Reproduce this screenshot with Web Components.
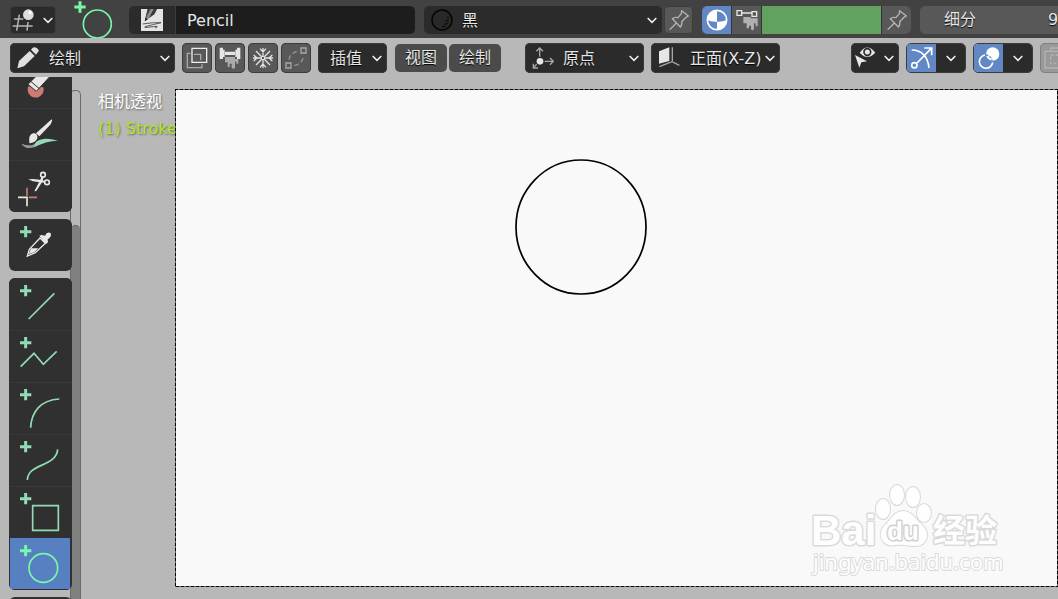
<!DOCTYPE html>
<html lang="zh-CN">
<head>
<meta charset="utf-8">
<title>Grease Pencil</title>
<style>
  html, body { margin: 0; height: 100%; overflow: hidden; }
  body { font: 16px/20px "DejaVu Sans", "Noto Sans CJK SC", sans-serif; color: #e6e6e6; background: #b8b8b8; }
</style>
</head>
<body>
<bl-app></bl-app>
<script>
const define = (name, css, html) => {
  const template = document.createElement('template');
  template.innerHTML = `<style>*{box-sizing:border-box}${css}</style>`;
  customElements.define(name, class extends HTMLElement {
    connectedCallback() {
      if (this.shadowRoot) return;
      const root = this.attachShadow({ mode: 'open' });
      root.append(template.content.cloneNode(true));
      const body = document.createElement('template');
      body.innerHTML = typeof html === 'function' ? html(this) : html;
      root.append(body.content.cloneNode(true));
    }
  });
};

/* Icon artwork is drawn on a grid of three units per pixel: [width, height, markup]. */
const plus = '<path d="M33 38H67M50 21V55" stroke="currentColor" stroke-width="9"/>';
const tool = m => [63, 52, m];
const shape = m => tool(plus + `<g fill="none" stroke="currentColor" stroke-width="5">${m}</g>`);
const ICONS = {
  chevron: [12, 12, '<path d="M5 12L18 25L31 12" fill="none" stroke="#f0f0f0" stroke-width="4.5"/>'],
  grid: [24, 24, '<path d="M6 33H34M2 54H62M22 20L14 68M48 42L45 68" fill="none" stroke="#b4b4b4" stroke-width="4.5"/><circle cx="49" cy="20" r="16" fill="#dcdcdc"/><circle cx="54" cy="14" r="5" fill="#fff"/>'],
  active: [42, 38, '<path d="M7 21H41M24 4V38" stroke="#79f7a9" stroke-width="9"/><circle cx="76" cy="72" r="42" fill="none" stroke="#79f7a9" stroke-width="5"/>'],
  thumb: [22, 22, '<path d="M0 0H66V66H0Z" fill="#e4e4e4"/><path d="M20 0H48L40 16L24 28L13 36L14 24Z" fill="#8a8a8a"/><path d="M20 0H28L17 22L13 36L14 24ZM38 0H48L40 16L24 27Z" fill="#3a3a3a"/><path d="M11 37L14 26L20 31Z" fill="#111"/><path d="M5 45Q34 40 60 41Q40 46 12 53Q8 56 18 55L48 52Q52 53 42 57" fill="none" stroke="#3c3c3c" stroke-width="2.5"/>'],
  ball: [22, 22, '<circle cx="33" cy="33" r="30" fill="#292929" stroke="#050505" stroke-width="4.5"/><path d="M53 24L48 27M54 33L44 37M52 43L40 46M44 52L33 53" stroke="#0c0c0c" stroke-width="4"/>'],
  pin: [20, 20, '<path d="M2 59L22 39M38 2L58 18L51 22L38 35Q40 44 34 51L10 26Q17 20 27 23L37 11Z" fill="none" stroke="#b4b4b4" stroke-width="4" stroke-linejoin="round"/>'],
  material: [22, 22, '<circle cx="33" cy="33" r="29" fill="none" stroke="#fff" stroke-width="5"/><path d="M33 38V4A29 29 0 0 0 4 33Q16 39 33 38ZM33 38V62A29 29 0 0 0 62 33Q50 39 33 38Z" fill="#fff"/>'],
  vertexpaint: [22, 22, '<path d="M18 12H48M3 5H17V19H3ZM48 8H62V22H48Z" fill="none" stroke="#e6e6e6" stroke-width="4"/><path d="M22 24H44V28H65V52H59V43H54V60Q50 68 45 60V50H39V58H32V43H22Z" fill="#b0b0b0"/>'],
  pencil: [22, 22, '<path d="M1 64L6 42L38 12L53 27L21 58Z" fill="#e0e0e0"/><path d="M42 8Q50 -4 60 4T61 17L57 23Z" fill="#e0e0e0"/>'],
  multiframe: [22, 22, '<path d="M14 19H4V62H48V52" fill="none" stroke="#aaa" stroke-width="4"/><path d="M18 4H62V46H18Z" fill="none" stroke="#eee" stroke-width="4"/><path d="M24 22H44V40" fill="none" stroke="#aaa" stroke-width="4"/>'],
  weight: [22, 22, '<path d="M2 2H12V36H2ZM54 2H64V36H54ZM18 14H48V24H18ZM12 8H17V30H12ZM49 8H54V30H49Z" fill="#e6e6e6"/><path d="M18 30H48V36H58V50H52V44H48V62Q43 68 38 62V50H32V60H26V46H18Z" fill="#aaa"/>'],
  snow: [22, 22, '<path d="M33 3V27M33 39V63M3 33H27M39 33H63M12 12L29 29M37 37L54 54M54 12L37 29M29 37L12 54M24 5L33 15L42 5M24 61L33 51L42 61M5 24L15 33L5 42M61 24L51 33L61 42" fill="none" stroke="#e2e2e2" stroke-width="4"/><circle cx="33" cy="33" r="5" fill="none" stroke="#e2e2e2" stroke-width="3"/>'],
  curve: [22, 22, '<path d="M3 48H18V63H3ZM48 3H63V18H48Z" fill="none" stroke="#a8a8a8" stroke-width="4"/><path d="M12 38Q14 20 40 11M28 56Q53 50 56 26" fill="none" stroke="#969696" stroke-width="4" stroke-dasharray="14 8"/>'],
  origin: [22, 22, '<circle cx="24" cy="43" r="10" fill="#e6e6e6"/><path d="M23 29V4M13 13L23 3L33 13M38 43H64M54 33L64 43L54 53M14 52L4 62M4 50V63H18" fill="none" stroke="#a8a8a8" stroke-width="4"/>'],
  plane: [22, 22, '<path d="M3 13L34 1V42L3 50Z" fill="#e6e6e6"/><path d="M43 1V42M4 59L42 44L64 55" fill="none" stroke="#a8a8a8" stroke-width="4"/>'],
  eye: [22, 22, '<path d="M14 17Q37 -14 61 17Q37 42 14 17Z" fill="#e6e6e6"/><circle cx="37" cy="15" r="10" fill="#e6e6e6" stroke="#2b2b2b" stroke-width="5"/><path d="M0 24L36 43L19 46L13 62Z" fill="#e6e6e6"/>'],
  gizmo: [22, 22, '<path d="M2 9Q48 10 54 63M18 48L61 4M40 3H62V25" fill="none" stroke="#fff" stroke-width="5"/><circle cx="10" cy="55" r="8" fill="#6187c4" stroke="#fff" stroke-width="5"/>'],
  overlay: [22, 22, '<circle cx="44" cy="21" r="20" fill="#fff"/><path d="M21 24A20 20 0 1 0 44 46" fill="none" stroke="#fff" stroke-width="5"/><path d="M24 24A20 20 0 0 1 42 41" fill="none" stroke="#6187c4" stroke-width="4" stroke-dasharray="7 4"/>'],
  xray: [22, 22, '<path d="M3 13V63H60V13ZM20 13V3H64V40" fill="none" stroke="#b4b4b4" stroke-width="4"/><path d="M20 24H46V50H20Z" fill="none" stroke="#b4b4b4" stroke-width="4" stroke-dasharray="9 6"/>'],
  erase: tool('<path d="M58 91A24 24 0 1 0 103 94Z" fill="#cc7b74"/><path d="M57 85L96 46L126 58L82 106Z" fill="#e8e8e8" stroke="#303030" stroke-width="3"/><path d="M65 76L91 98" stroke="#303030" stroke-width="3"/>'),
  brush: tool('<path d="M128 34Q132 37 124 50L91 85L81 76Z" fill="#e8e8e8"/><path d="M61 106Q57 77 75 75Q87 78 85 91Q80 105 61 106Z" fill="#e8e8e8"/><path d="M37 107Q70 119 84 101L76 118Q50 126 37 107Z" fill="#999"/><path d="M76 118Q73 96 108 92Q124 91 147 98Q110 99 76 118Z" fill="#93dbb5"/>'),
  cut: tool('<g fill="none" stroke="#e8e8e8" stroke-width="5"><circle cx="102" cy="44" r="7"/><circle cx="114" cy="67" r="7"/></g><path d="M58 58Q78 55 106 62L104 68L72 64ZM76 94L93 61L99 49L104 52L100 65L82 93Z" fill="#e8e8e8"/><path d="M27 112H54V139" fill="none" stroke="#e8e8e8" stroke-width="5"/><path d="M54 83V107M59 112H84" stroke="#cc7b74" stroke-width="5"/>'),
  dropper: tool(plus + '<path d="M55 111L61 91L93 57L109 73L79 101Z" fill="#303030" stroke="#e8e8e8" stroke-width="4"/><path d="M59 106L66 88H88L77 99Z" fill="#e8e8e8"/><path d="M91 50L98 48L108 50Q114 36 125 42Q129 54 116 61L117 70L110 76Z" fill="#e8e8e8"/>'),
  line: shape('<path d="M59 123L136 46"/>'),
  polyline: shape('<path d="M35 110L75 70L103 103L143 64"/>'),
  arc: shape('<path d="M65 137C67 90 94 54 151 51"/>'),
  bezier: shape('<path d="M55 138C56 88 142 99 146 46"/>'),
  box: shape('<path d="M71 59H148V133H71Z"/>'),
  circle: shape('<circle cx="103" cy="90" r="43"/>'),
};

define('bl-icon', ':host{display:inline-flex;flex:none} svg{display:block}', el => {
  const [w, h, art] = ICONS[el.getAttribute('name')];
  return `<svg width="${w}" height="${h}" viewBox="0 0 ${w * 3} ${h * 3}" aria-hidden="true">${art}</svg>`;
});

/* Drop-down: a select with an icon and a chevron stacked over it. */
define('bl-select', `
  :host{display:grid;align-items:center;height:30px;border-radius:5px;background:#2b2b2b;box-shadow:inset 0 0 0 1px #3a3a3a;flex:none}
  :host([plain]){height:28px;background:#2b2b2b;box-shadow:none}
  select,.art{grid-area:1/1}
  select{appearance:none;width:100%;height:100%;border:0;margin:0;padding:2px 0 0 var(--indent,12px);background:none;color:inherit;font:inherit;text-shadow:0 1px 1px #000}
  .art{display:flex;align-items:center;justify-content:space-between;padding:0 4px 0 7px;pointer-events:none}
  .art bl-icon:last-child{margin-left:auto}`,
  el => `<select aria-label="${el.getAttribute('label')}"><option>${el.getAttribute('value')}</option></select>
  <span class="art">${el.hasAttribute('icon') ? `<bl-icon name="${el.getAttribute('icon')}"></bl-icon>` : ''}<bl-icon name="chevron"></bl-icon></span>`);

define('bl-button', `
  :host{display:flex;height:30px;border-radius:5px;overflow:hidden;background:#585858;box-shadow:0 0 0 1px #3c3c3c inset;flex:none}
  :host([dark]){background:#2b2b2b}
  :host([on]){background:#6187c4}
  :host([dim]){background:#999;box-shadow:0 0 0 1px #808080 inset}
  :host([text]){height:28px;background:#4b4b4b;box-shadow:none}
  :host([short]){height:28px}
  :host([joined]){border-radius:0;box-shadow:none}
  button{display:flex;align-items:center;justify-content:center;gap:6px;width:100%;border:0;margin:0;padding:0;background:none;color:inherit;font:inherit;text-shadow:0 1px 1px #000}`,
  el => `<button type="button" aria-label="${el.getAttribute('label')}"><slot></slot></button>`);

define('bl-field', `
  :host{display:flex;flex:1 0 160px;height:28px;border-radius:5px;background:#585858;overflow:hidden;text-shadow:0 1px 1px #000}
  label{flex:none;width:128px;padding-left:24px;line-height:28px}
  input{width:40px;flex:1;border:0;padding:0;background:none;color:inherit;font:inherit;text-shadow:inherit}`,
  '<label for="n">细分</label><input id="n" value="9" inputmode="numeric">');

define('bl-tool-settings', `
  :host{display:flex;align-items:center;gap:9px;height:38px;padding:2px 0 0 10px;background:#424242;overflow:hidden;flex:none}
  .active{display:flex;flex:none;justify-content:center;width:55px;margin-top:-2px}
  .row{display:flex;flex:none}
  .brush{border-radius:5px;overflow:hidden}
  .brush input{width:240px;height:28px;border:0;border-left:1px solid #3c3c3c;padding:0 11px;background:#1d1d1d;color:inherit;font:inherit}
  .material{gap:2px}
  .material bl-select{width:238px;--indent:38px}
  .paint{border-radius:5px;overflow:hidden;gap:1px;background:#333}
  input[type=color]{appearance:none;width:119px;height:28px;border:0;padding:0;background:none}
  ::-webkit-color-swatch-wrapper{padding:0} ::-webkit-color-swatch{border:0;border-radius:0}
  .w46{width:46px}.w29{width:29px}`,
  `<bl-button class="w46" dark short label="编辑器类型"><bl-icon name="grid"></bl-icon><bl-icon name="chevron"></bl-icon></bl-button>
  <div class="active"><bl-icon name="active"></bl-icon></div>
  <div class="row brush"><bl-button class="w46" dark short joined label="笔刷"><bl-icon name="thumb"></bl-icon></bl-button><input aria-label="笔刷名称" value="Pencil"></div>
  <div class="row material"><bl-select plain icon="ball" label="材质" value="黑"></bl-select><bl-button class="w29" short label="固定材质"><bl-icon name="pin"></bl-icon></bl-button></div>
  <div class="row paint"><bl-button class="w29" on short joined label="材质颜色"><bl-icon name="material"></bl-icon></bl-button><bl-button class="w29" short joined label="顶点颜色"><bl-icon name="vertexpaint"></bl-icon></bl-button><input type="color" aria-label="颜色" value="#61a261"><bl-button class="w29" short joined label="固定颜色"><bl-icon name="pin"></bl-icon></bl-button></div>
  <bl-field></bl-field>`);

define('bl-header', `
  :host{display:flex;align-items:center;gap:7px;height:39px;padding:1px 0 0 10px;overflow:hidden;flex:none}
  .row{display:flex;flex:none}
  .toggles{gap:3px}.menus{gap:2px;padding:0 17px 0 1px}
  .mode{width:165px;--indent:39px}.interp{width:69px}.origin{width:119px;--indent:38px}.plane{width:129px;--indent:39px}
  .sq{width:30px}.menu{width:52px}.vis{width:48px}
  .right{gap:7px;margin-left:auto}
  .split{border-radius:5px;overflow:hidden;border:1px solid #3c3c3c;height:30px;align-items:center}
  .split bl-button{width:29px}
  .edge{width:18px;overflow:hidden}`,
  `<bl-select class="mode" icon="pencil" label="模式" value="绘制"></bl-select>
  <div class="row toggles"><bl-button class="sq" label="多帧"><bl-icon name="multiframe"></bl-icon></bl-button><bl-button class="sq" label="权重"><bl-icon name="weight"></bl-icon></bl-button><bl-button class="sq" label="叠加笔画"><bl-icon name="snow"></bl-icon></bl-button><bl-button class="sq" label="曲线编辑"><bl-icon name="curve"></bl-icon></bl-button></div>
  <bl-select class="interp" label="插值" value="插值"></bl-select>
  <div class="row menus"><bl-button class="menu" text label="视图">视图</bl-button><bl-button class="menu" text label="绘制">绘制</bl-button></div>
  <bl-select class="origin" icon="origin" label="笔画位置" value="原点"></bl-select>
  <bl-select class="plane" icon="plane" label="绘制平面" value="正面(X-Z)"></bl-select>
  <div class="row right">
    <bl-button class="vis" dark label="可见性"><bl-icon name="eye"></bl-icon><bl-icon name="chevron"></bl-icon></bl-button>
    <div class="row split"><bl-button on joined label="控件"><bl-icon name="gizmo"></bl-icon></bl-button><bl-button dark joined label="控件选项"><bl-icon name="chevron"></bl-icon></bl-button></div>
    <div class="row split"><bl-button on joined label="叠加层"><bl-icon name="overlay"></bl-icon></bl-button><bl-button dark joined label="叠加层选项"><bl-icon name="chevron"></bl-icon></bl-button></div>
    <div class="row edge"><bl-button class="sq" dim label="透视"><bl-icon name="xray"></bl-icon></bl-button></div>
  </div>`);

define('bl-tool', `
  :host{display:block;height:52px;color:#93dbb5;background:#303030}
  :host(:not(:first-child)){box-shadow:inset 0 1px #393939}
  :host([on]){background:#5680c2;color:#79f7a9;box-shadow:inset 1px 0 #303030,inset -2px -1px #303030}
  button{display:block;border:0;margin:0;padding:0;background:none;color:inherit}`,
  el => `<button type="button" aria-label="${el.getAttribute('name')}"><bl-icon name="${el.getAttribute('name')}"></bl-icon></button>`);

define('bl-tool-group', ':host{display:block;flex:none;border-radius:6px;overflow:hidden;background:#303030}', '<slot></slot>');

define('bl-toolbar', `
  :host{display:flex;overflow:hidden;padding-left:9px}
  .tools{display:flex;flex-direction:column;gap:7px;width:63px;margin-top:-21px;z-index:1}
  .track{width:11px;margin:13px 0 0 -2px;border:1px solid #6a6a6a;border-bottom:0;border-radius:5px 5px 0 0;padding-top:134px;display:flex}
  .thumb{flex:1;background:#808080;border-top:1px solid #606060;border-radius:5px 5px 0 0}`,
  `<div class="tools">
    <bl-tool-group><bl-tool name="erase"></bl-tool><bl-tool name="brush"></bl-tool><bl-tool name="cut"></bl-tool></bl-tool-group>
    <bl-tool-group><bl-tool name="dropper"></bl-tool></bl-tool-group>
    <bl-tool-group><bl-tool name="line"></bl-tool><bl-tool name="polyline"></bl-tool><bl-tool name="arc"></bl-tool><bl-tool name="bezier"></bl-tool><bl-tool name="box"></bl-tool><bl-tool name="circle" on></bl-tool></bl-tool-group>
    <bl-tool-group><bl-tool name="dropper"></bl-tool></bl-tool-group>
  </div><div class="track"><div class="thumb"></div></div>`);

define('bl-view-info', `
  :host{display:block;padding:11px 0 0 17px;width:94px;overflow:hidden;white-space:nowrap;line-height:27px;color:#fff;text-shadow:1px 1px 2px #666}
  p{margin:0}.object{color:#b0e81a}`,
  '<p>相机透视</p><p class="object">(1) Stroke</p>');

define('bl-watermark', ':host{display:block} svg{display:block;overflow:visible}', `
  <svg width="196" height="96" viewBox="0 0 196 96" fill="#fefefe" stroke="#dadada" stroke-width="2" paint-order="stroke" stroke-linejoin="round" font-family="'Liberation Sans','Noto Sans CJK SC',sans-serif">
    <ellipse cx="74" cy="24" rx="7" ry="10"/><ellipse cx="88" cy="10" rx="7" ry="10"/><ellipse cx="104" cy="12" rx="7" ry="10"/><ellipse cx="115" cy="28" rx="7" ry="9"/>
    <path d="M94 26C102 26 106 33 112 39C122 47 119 61 106 61C100 61 95 59 87 60C73 63 67 49 76 40C82 35 85 26 94 26Z"/>
    <text x="2" y="60" font-size="42" font-weight="700" stroke-width="3">Bai</text>
    <text x="78" y="55" font-size="26" font-weight="700" stroke="#d0d0d0" stroke-width="3">du</text>
    <text x="124" y="57" font-size="32" font-weight="700" stroke-width="3">经验</text>
    <text x="4" y="85" font-size="22" font-family="Noto Sans">jingyan.baidu.com</text>
  </svg>`);

define('bl-camera', `
  :host{display:block;position:relative;margin:12px 0;background:#f9f9f9;overflow:hidden}
  .frame,.stroke{position:absolute;left:0;top:0}
  .frame{width:100%;height:100%}
  bl-watermark{position:absolute;right:53px;bottom:6px}`,
  `<svg class="stroke" width="500" height="220" aria-hidden="true"><ellipse cx="406" cy="138" rx="65" ry="67" fill="none" stroke="#000" stroke-width="1.7"/></svg>
  <bl-watermark></bl-watermark>
  <svg class="frame" aria-hidden="true"><rect width="100%" height="100%" fill="none" stroke="#666" stroke-width="2"/><rect width="100%" height="100%" fill="none" stroke="#000" stroke-width="2" stroke-dasharray="3 2"/></svg>`);

define('bl-app', `
  :host{display:flex;flex-direction:column;height:100vh}
  main{display:grid;grid-template-columns:auto auto 1fr;flex:1;min-height:0}
  bl-toolbar{min-height:0}`,
  '<bl-tool-settings></bl-tool-settings><bl-header></bl-header><main><bl-toolbar></bl-toolbar><bl-view-info></bl-view-info><bl-camera></bl-camera></main>');
</script>
</body>
</html>
